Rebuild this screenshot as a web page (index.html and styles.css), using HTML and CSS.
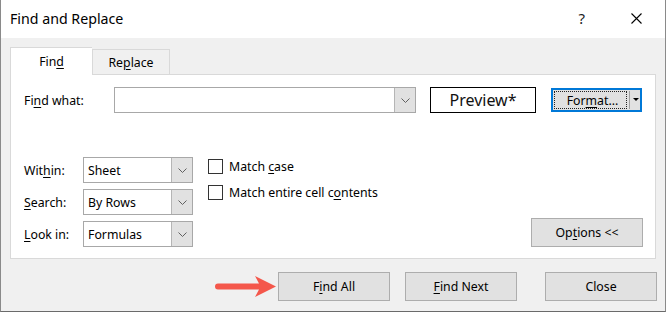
FILE: index.html
```html
<!DOCTYPE html>
<html>
<head>
<meta charset="utf-8">
<link rel="stylesheet" href="styles.css">
</head>
<body>
<div class="win">
  <div class="titlebar">
    <span class="title">Find and Replace</span>
    <span class="help">?</span>
    <span class="close"><svg width="11" height="11" viewBox="0 0 11 11"><path d="M0.5 0.5L10.5 10.5M10.5 0.5L0.5 10.5" stroke="#000" stroke-width="1.1" fill="none"/></svg></span>
  </div>
  <div class="body">
    <div class="tabs">
      <div class="tab active">Fin<u>d</u></div>
      <div class="tab">Re<u>p</u>lace</div>
    </div>
    <div class="panel">
      <div class="row1">
        <span class="lbl-what">Fi<u>n</u>d what:</span>
        <div class="combo combo-what">
          <span class="val"></span>
          <span class="drop"><svg width="9" height="5" viewBox="0 0 9 5"><path d="M0.5 0.5L4.5 4.5L8.5 0.5" stroke="#606060" stroke-width="1" fill="none"/></svg></span>
        </div>
        <div class="preview">Preview*</div>
        <div class="format">
          <span class="fmt-main"><span class="fmt-focus">For<u>m</u>at...</span></span>
          <span class="fmt-sep"></span>
          <span class="fmt-arrow"></span>
        </div>
      </div>
      <div class="lower">
        <div class="selects">
          <span class="lbl">Wit<u>h</u>in:</span>
          <div class="combo"><span class="val">Sheet</span><span class="drop"><svg width="9" height="5" viewBox="0 0 9 5"><path d="M0.5 0.5L4.5 4.5L8.5 0.5" stroke="#606060" stroke-width="1" fill="none"/></svg></span></div>
          <span class="lbl"><u>S</u>earch:</span>
          <div class="combo"><span class="val">By Rows</span><span class="drop"><svg width="9" height="5" viewBox="0 0 9 5"><path d="M0.5 0.5L4.5 4.5L8.5 0.5" stroke="#606060" stroke-width="1" fill="none"/></svg></span></div>
          <span class="lbl"><u>L</u>ook in:</span>
          <div class="combo"><span class="val">Formulas</span><span class="drop"><svg width="9" height="5" viewBox="0 0 9 5"><path d="M0.5 0.5L4.5 4.5L8.5 0.5" stroke="#606060" stroke-width="1" fill="none"/></svg></span></div>
        </div>
        <div class="checks">
          <div class="check"><span class="box"></span><span>Match <u>c</u>ase</span></div>
          <div class="check"><span class="box"></span><span>Match entire cell c<u>o</u>ntents</span></div>
        </div>
        <div class="opt-wrap">
          <div class="btn btn-options">Op<u>t</u>ions &lt;&lt;</div>
        </div>
      </div>
    </div>
    <div class="footer">
      <div class="btn">F<u>i</u>nd All</div>
      <div class="btn"><u>F</u>ind Next</div>
      <div class="btn btn-close">Close</div>
    </div>
  </div>
  <svg class="arrow" width="64" height="22" viewBox="0 0 64 22"><path d="M3 7.5H44L40 0L61 10.5L40 21L44 13.5H3A3 3 0 0 1 3 7.5Z" fill="#f4574b"/></svg>
</div>
</body>
</html>
```
FILE: styles.css
```css
html, body {
  margin: 0;
  padding: 0;
  background: #ffffff;
}
body {
  font-family: "Noto Sans", "Open Sans", sans-serif;
  font-size: 12.3px;
  color: #000;
}
u {
  text-decoration: underline;
  text-underline-offset: 2px;
}
.win {
  position: relative;
  width: 666px;
  height: 312px;
  box-sizing: border-box;
  border-left: 1px solid #8a8a8a;
  border-right: 1px solid #8a8a8a;
  border-bottom: 1px solid #6a6a6a;
  display: flex;
  flex-direction: column;
  background: #f0f0f0;
}
.titlebar {
  height: 38px;
  flex: none;
  background: #fff;
  display: flex;
  align-items: center;
  padding-left: 9px;
  box-sizing: border-box;
}
.title {
  font-size: 14.2px;
  padding-bottom: 1px;
}
.help {
  margin-left: auto;
  font-size: 15px;
  color: #222;
  margin-right: 46px;
  padding-bottom: 2px;
}
.close {
  display: flex;
  margin-right: 23px;
  margin-bottom: 2px;
}
.body {
  flex: 1;
  padding: 9px 9px 0 9px;
  display: flex;
  flex-direction: column;
}
.tabs {
  display: flex;
  height: 27px;
  align-items: flex-end;
  position: relative;
  z-index: 1;
}
.tab {
  height: 25px;
  box-sizing: border-box;
  border: 1px solid #d9d9d9;
  border-bottom: none;
  background: #f0f0f0;
  display: flex;
  align-items: center;
  justify-content: center;
  width: 78px;
  padding-top: 1px;
}
.tab.active {
  height: 28px;
  margin-bottom: -1px;
  width: 82px;
  background: #fff;
  border-right: none;
  padding-top: 0;
}
.panel {
  height: 185px;
  box-sizing: border-box;
  background: #fff;
  border: 1px solid #d9d9d9;
  padding: 12px 12px 11px 13px;
  display: flex;
  flex-direction: column;
}
.row1 {
  display: flex;
  align-items: center;
  height: 26px;
}
.lbl-what {
  width: 90px;
  flex: none;
}
.combo {
  display: flex;
  height: 26px;
  box-sizing: border-box;
  border: 1px solid #a8a8a8;
  background: #fff;
}
.combo .val {
  flex: 1;
  display: flex;
  align-items: center;
  padding-left: 4px;
}
.combo .drop {
  width: 20px;
  flex: none;
  background: #e1e1e1;
  border-left: 1px solid #b5b5b5;
  display: flex;
  align-items: center;
  justify-content: center;
}
.combo-what {
  width: 302px;
}
.preview {
  margin-left: 14px;
  width: 106px;
  height: 26px;
  box-sizing: border-box;
  border: 1px solid #000;
  display: flex;
  align-items: center;
  justify-content: center;
  font-size: 16px;
  color: #111;
}
.format {
  margin-left: 15px;
  width: 91px;
  height: 24px;
  box-sizing: border-box;
  border: 2px solid #0078d7;
  background: #e1e1e1;
  display: flex;
  align-items: stretch;
}
.fmt-main {
  flex: 1;
  padding: 1px 0 1px 1px;
  display: flex;
}
.fmt-focus {
  flex: 1;
  border: 1px dotted #222;
  display: flex;
  align-items: center;
  justify-content: center;
  padding-left: 4px;
}
.fmt-sep {
  width: 1px;
  background: #a0a0a0;
  margin: 1px 0 1px 2px;
}
.fmt-arrow {
  width: 10px;
  position: relative;
}
.fmt-arrow::after {
  content: "";
  position: absolute;
  left: 3px;
  top: 8px;
  border-left: 3px solid transparent;
  border-right: 3px solid transparent;
  border-top: 3px solid #000;
}
.lower {
  margin-top: 44px;
  display: flex;
  height: 90px;
}
.selects {
  display: grid;
  grid-template-columns: 59px 110px;
  grid-auto-rows: 26px;
  row-gap: 6px;
  align-items: center;
}
.checks {
  margin-left: 15px;
  margin-top: 1px;
  display: flex;
  flex-direction: column;
  gap: 10px;
}
.check {
  display: flex;
  align-items: center;
  height: 16px;
}
.box {
  width: 15px;
  height: 15px;
  box-sizing: border-box;
  border: 1px solid #333;
  background: #fff;
  margin-right: 6px;
}
.opt-wrap {
  margin-left: auto;
  display: flex;
  align-items: flex-end;
}
.btn {
  width: 112px;
  height: 29px;
  box-sizing: border-box;
  border: 1px solid #adadad;
  background: #e1e1e1;
  display: flex;
  align-items: center;
  justify-content: center;
}
.btn-options {
  height: 29px;
}
.footer {
  margin-top: 13px;
  display: flex;
  justify-content: flex-end;
  gap: 15px;
  padding-right: 0;
  margin-right: -1px;
}
.btn-close {
  margin-left: 13px;
}
.arrow {
  position: absolute;
  left: 214px;
  top: 276px;
}
```
